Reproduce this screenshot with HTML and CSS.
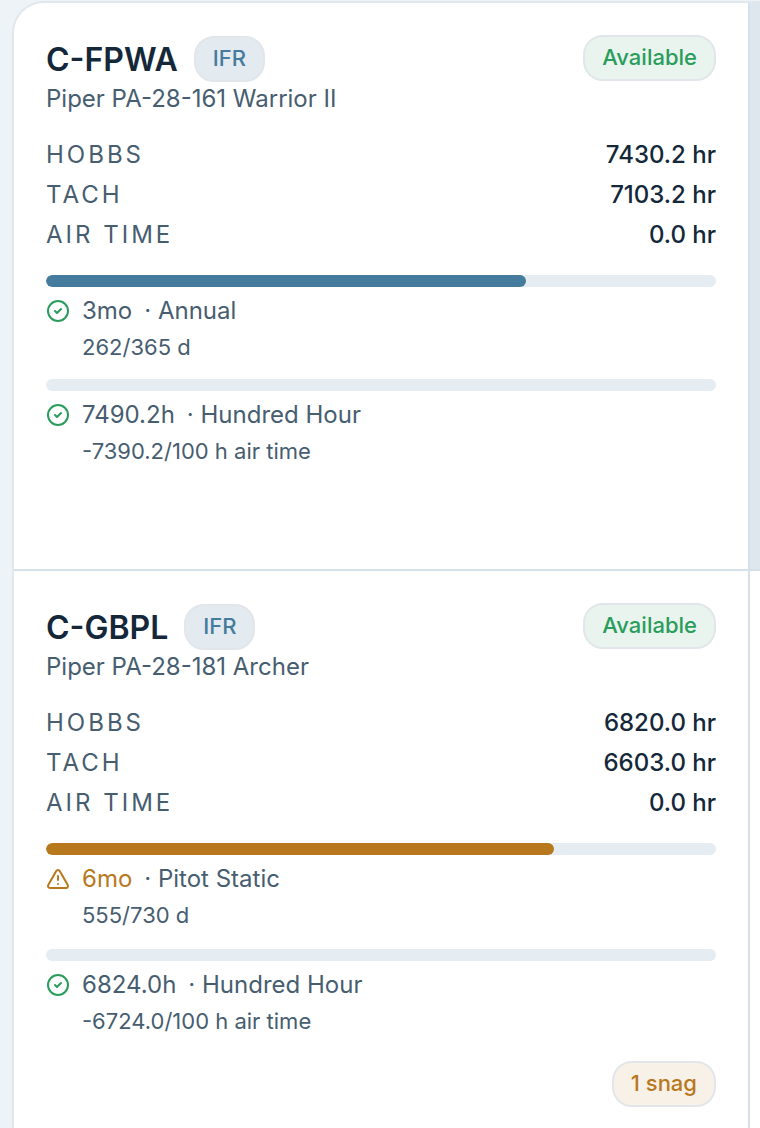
FILE: index.html
```
<!DOCTYPE html>
<html lang="en">
<head>
<meta charset="utf-8">
<meta name="viewport" content="width=device-width, initial-scale=1">
<title>Fleet</title>
<link rel="stylesheet" href="styles.css">
</head>
<body>
<main class="fleet">
  <article class="aircraft">
    <header class="aircraft-head">
      <div class="identity">
        <div class="title-row">
          <h2 class="tail-number">C-FPWA</h2>
          <span class="badge badge-ifr">IFR</span>
        </div>
        <p class="model">Piper PA-28-161 Warrior II</p>
      </div>
      <span class="badge badge-available">Available</span>
    </header>
    <dl class="meters">
      <div class="meter"><dt>HOBBS</dt><dd>7430.2 hr</dd></div>
      <div class="meter"><dt>TACH</dt><dd>7103.2 hr</dd></div>
      <div class="meter"><dt>AIR TIME</dt><dd>0.0 hr</dd></div>
    </dl>
    <ul class="checks">
      <li class="check">
        <div class="track"><div class="fill" style="width:71.7%"></div></div>
        <div class="check-body">
          <svg class="icon icon-ok" viewBox="0 0 24 24" aria-hidden="true"><circle cx="12" cy="12" r="10"/><path d="m9 12 2 2 4-4"/></svg>
          <div class="check-text">
            <p class="check-title"><span class="due">3mo</span><span>· Annual</span></p>
            <p class="check-detail">262/365 d</p>
          </div>
        </div>
      </li>
      <li class="check">
        <div class="track"></div>
        <div class="check-body">
          <svg class="icon icon-ok" viewBox="0 0 24 24" aria-hidden="true"><circle cx="12" cy="12" r="10"/><path d="m9 12 2 2 4-4"/></svg>
          <div class="check-text">
            <p class="check-title"><span class="due">7490.2h</span><span>· Hundred Hour</span></p>
            <p class="check-detail">-7390.2/100 h air time</p>
          </div>
        </div>
      </li>
    </ul>
  </article>
  <div class="empty-cell"></div>
  <article class="aircraft">
    <header class="aircraft-head">
      <div class="identity">
        <div class="title-row">
          <h2 class="tail-number">C-GBPL</h2>
          <span class="badge badge-ifr">IFR</span>
        </div>
        <p class="model">Piper PA-28-181 Archer</p>
      </div>
      <span class="badge badge-available">Available</span>
    </header>
    <dl class="meters">
      <div class="meter"><dt>HOBBS</dt><dd>6820.0 hr</dd></div>
      <div class="meter"><dt>TACH</dt><dd>6603.0 hr</dd></div>
      <div class="meter"><dt>AIR TIME</dt><dd>0.0 hr</dd></div>
    </dl>
    <ul class="checks">
      <li class="check check-warning">
        <div class="track"><div class="fill" style="width:75.8%"></div></div>
        <div class="check-body">
          <svg class="icon icon-warning" viewBox="0 0 24 24" aria-hidden="true"><path d="m21.73 18-8-14a2 2 0 0 0-3.48 0l-8 14A2 2 0 0 0 4 21h16a2 2 0 0 0 1.73-3"/><path d="M12 9v4"/><path d="M12 17h.01"/></svg>
          <div class="check-text">
            <p class="check-title"><span class="due">6mo</span><span>· Pitot Static</span></p>
            <p class="check-detail">555/730 d</p>
          </div>
        </div>
      </li>
      <li class="check">
        <div class="track"></div>
        <div class="check-body">
          <svg class="icon icon-ok" viewBox="0 0 24 24" aria-hidden="true"><circle cx="12" cy="12" r="10"/><path d="m9 12 2 2 4-4"/></svg>
          <div class="check-text">
            <p class="check-title"><span class="due">6824.0h</span><span>· Hundred Hour</span></p>
            <p class="check-detail">-6724.0/100 h air time</p>
          </div>
        </div>
      </li>
    </ul>
    <footer class="aircraft-foot"><span class="badge badge-snag">1 snag</span></footer>
  </article>
  <div></div>
</main>
</body>
</html>
```
FILE: styles.css
```
* {
  box-sizing: border-box;
  margin: 0;
  padding: 0;
}

body {
  background: #edf3f7;
  color: #475d70;
  font-family: Inter, "Liberation Sans", sans-serif;
  font-size: 24px;
  line-height: 32px;
  padding: 1px 0 0 12px;
  height: 100vh;
  overflow: hidden;
}

.fleet {
  display: grid;
  grid-template-columns: 1fr 10px;
  grid-auto-rows: minmax(568px, auto);
  background: #fff;
  border: 2px solid #e2e7ec;
  border-right: 0;
  border-radius: 32px 0 0 0;
  overflow: hidden;
}

.aircraft {
  border-right: 2px solid #d5e1ea;
  border-bottom: 2px solid #d5e1ea;
  padding: 32px;
}

.empty-cell {
  background: #dfe7ee;
  border-bottom: 2px solid #d5e1ea;
}

.aircraft-head {
  display: flex;
  justify-content: space-between;
  align-items: flex-start;
}

.title-row {
  display: flex;
  align-items: center;
  gap: 16px;
  height: 48px;
}

.tail-number {
  color: #14283a;
  font-size: 32px;
  font-weight: 600;
  line-height: 48px;
  padding-top: 2px;
}

.badge {
  display: inline-block;
  border: 2px solid #e2e6ea;
  border-radius: 20px;
  padding: 4px 17px 6px;
  font-size: 22px;
  font-weight: 500;
  line-height: 32px;
}

.badge-ifr {
  background: #e3eaf0;
  color: #457b9d;
}

.badge-available {
  background: #e9f4ee;
  color: #2a9d5c;
}

.badge-snag {
  background: #f8f1e8;
  color: #b8781e;
}

.meters {
  display: grid;
  gap: 8px;
  margin-top: 24px;
}

.meter {
  display: flex;
  justify-content: space-between;
}

.meter dt {
  letter-spacing: 3px;
}

.meter dd {
  color: #14283a;
  font-weight: 500;
}

.checks {
  display: grid;
  gap: 16px;
  margin-top: 24px;
  list-style: none;
}

.check-warning {
  padding-bottom: 2px;
}

.track {
  height: 12px;
  border-radius: 6px;
  background: #e5ecf2;
  overflow: hidden;
}

.fill {
  height: 100%;
  border-radius: 6px;
  background: #457b9d;
}

.check-warning .fill {
  background: #b8781e;
}

.check-body {
  display: flex;
  gap: 12px;
  margin-top: 8px;
}

.icon {
  flex: none;
  width: 24px;
  height: 24px;
  margin-top: 4px;
  fill: none;
  stroke: currentColor;
  stroke-width: 2;
  stroke-linecap: round;
  stroke-linejoin: round;
}

.icon-ok {
  color: #2a9d5c;
}

.icon-warning,
.check-warning .due {
  color: #b8781e;
}

.check-title {
  display: flex;
  gap: 12px;
}

.check-detail {
  margin-top: 4px;
  font-size: 22px;
}

.aircraft-foot {
  display: flex;
  justify-content: flex-end;
  margin-top: 24px;
}
```
